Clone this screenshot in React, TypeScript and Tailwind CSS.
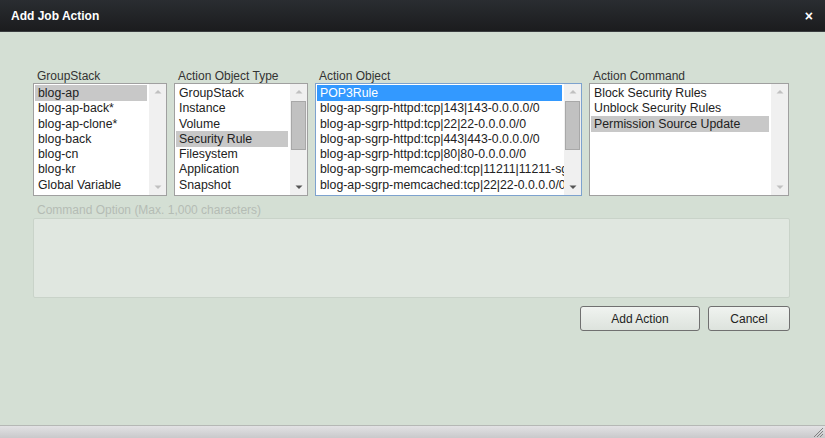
import React from "react";

type ListProps = {
  label: string;
  items: string[];
  selected: number;
  width: string;
  focused?: boolean;
  thumb?: boolean;
};

function Arrow({ up, dim }: { up?: boolean; dim?: boolean }) {
  return (
    <svg width="8" height="5" viewBox="0 0 8 5" className="block">
      <polygon
        points={up ? "0.5,4.5 7.5,4.5 4,1" : "0.5,0.5 7.5,0.5 4,4"}
        fill={dim ? "#c0c0c0" : "#555"}
      />
    </svg>
  );
}

function ListBox({ label, items, selected, width, focused, thumb }: ListProps) {
  return (
    <div className={`flex flex-col ${width}`}>
      <div className="text-[12px] leading-[14px] text-[#333] pl-[4px] mt-[1px]">{label}</div>
      <div
        className={`flex h-[113px] bg-white border ${
          focused ? "border-[#7da2ce]" : "border-[#a0a0a0]"
        }`}
      >
        <ul className="flex-1 min-w-0 overflow-hidden pt-[1px] pl-[1px] pr-[2px]">
          {items.map((it, i) => (
            <li
              key={it}
              className={`h-[15.3px] leading-[15.3px] pt-[1px] box-content pb-0 -mb-[1px] pl-[3px] whitespace-nowrap text-[12.3px] ${
                i === selected
                  ? focused
                    ? "bg-[#3399ff] text-white"
                    : "bg-[#c8c8c8] text-[#222]"
                  : "text-[#222]"
              }`}
            >
              {it}
            </li>
          ))}
        </ul>
        <div className="w-[17px] shrink-0 bg-[#f0f0f0] flex flex-col items-center py-[5px]">
          <Arrow up dim />
          <div className="flex-1 w-full px-[1px] pt-[7px]">
            {thumb && <div className="h-[49px] bg-[#c1c1c1] border border-[#a8a8a8]" />}
          </div>
          <Arrow dim={!thumb} />
        </div>
      </div>
    </div>
  );
}

export default function App() {
  return (
    <div className="w-[825px] h-[438px] flex flex-col font-['Liberation_Sans',Arial,sans-serif] bg-[#d4dfd4]">
      <div className="h-[32px] shrink-0 flex items-center justify-between pl-[11px] pr-[12px] bg-gradient-to-b from-[#2a2d31] to-[#1b1c1e] border-b border-[#3a3d40]">
        <span className="text-white font-bold text-[12px]">Add Job Action</span>
        <span className="text-white font-bold text-[14px] leading-none">×</span>
      </div>
      <div className="flex-1 flex flex-col pl-[33px] pr-[35px] pt-[36px]">
        <div className="flex gap-[7px]">
          <ListBox
            label="GroupStack"
            width="w-[134px]"
            selected={0}
            items={[
              "blog-ap",
              "blog-ap-back*",
              "blog-ap-clone*",
              "blog-back",
              "blog-cn",
              "blog-kr",
              "Global Variable",
            ]}
          />
          <ListBox
            label="Action Object Type"
            width="w-[134px]"
            selected={3}
            thumb
            items={[
              "GroupStack",
              "Instance",
              "Volume",
              "Security Rule",
              "Filesystem",
              "Application",
              "Snapshot",
            ]}
          />
          <ListBox
            label="Action Object"
            width="w-[267px]"
            selected={0}
            focused
            thumb
            items={[
              "POP3Rule",
              "blog-ap-sgrp-httpd:tcp|143|143-0.0.0.0/0",
              "blog-ap-sgrp-httpd:tcp|22|22-0.0.0.0/0",
              "blog-ap-sgrp-httpd:tcp|443|443-0.0.0.0/0",
              "blog-ap-sgrp-httpd:tcp|80|80-0.0.0.0/0",
              "blog-ap-sgrp-memcached:tcp|11211|11211-sgrp",
              "blog-ap-sgrp-memcached:tcp|22|22-0.0.0.0/0",
            ]}
          />
          <ListBox
            label="Action Command"
            width="w-[200px]"
            selected={2}
            items={["Block Security Rules", "Unblock Security Rules", "Permission Source Update"]}
          />
        </div>
        <div className="mt-[7px] text-[12px] leading-[14px] text-[#b4bcb4] pl-[4px]">
          Command Option (Max. 1,000 characters)
        </div>
        <div className="mt-[1px] h-[80px] w-[757px] bg-[#e0e7e0] border border-[#c9d3c9] rounded-[2px]" />
        <div className="flex justify-end gap-[8px] mt-[8px] w-[757px]">
          <button className="w-[120px] h-[25px] rounded-[3px] border border-[#707070] bg-gradient-to-b from-[#f0f3f0] to-[#dde3dd] text-[12px] text-[#222]">
            Add Action
          </button>
          <button className="w-[82px] h-[25px] rounded-[3px] border border-[#707070] bg-gradient-to-b from-[#f0f3f0] to-[#dde3dd] text-[12px] text-[#222]">
            Cancel
          </button>
        </div>
      </div>
      <div className="h-[13px] shrink-0 border-t border-[#b5b8b5] bg-gradient-to-b from-[#e2e2e4] to-[#c9c9cb] flex justify-end items-end">
        <svg width="12" height="11" viewBox="0 0 12 11" className="mr-[1px]">
          <line x1="11" y1="1" x2="2" y2="10" stroke="#808080" />
          <line x1="11" y1="4" x2="5" y2="10" stroke="#808080" />
          <line x1="11" y1="7" x2="8" y2="10" stroke="#808080" />
        </svg>
      </div>
    </div>
  );
}
